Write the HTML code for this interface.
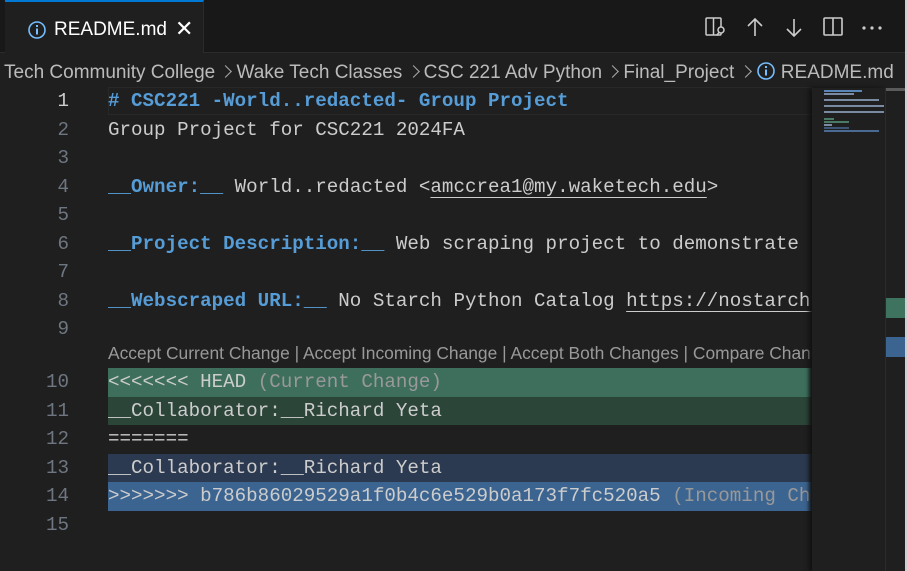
<!DOCTYPE html>
<html><head><style>
body{margin:0;width:907px;height:571px;background:#1f1f1f;overflow:hidden;position:relative;font-family:"Liberation Sans",sans-serif}
.tabbar{position:absolute;left:0;top:0;width:907px;height:53px;background:#181818;border-bottom:1px solid #2b2b2b;box-sizing:border-box}
.tab{position:absolute;left:5px;top:0;width:199px;height:53px;background:#1f1f1f;border-top:2px solid #0078d4;box-sizing:border-box;border-right:1px solid #2b2b2b}
.tab .t{position:absolute;left:49px;top:17px;color:#fff;font-size:19px}
.tab .x{position:absolute;left:170px;top:14px;color:#fff;font-size:22px}
.crumb{position:absolute;left:4px;top:61px;color:#bbb;font-size:19px;white-space:nowrap}
.ln{position:absolute;left:0;top:0;width:69px;color:#6e7681;font:19.2px "Liberation Mono",monospace}
.ln .row{width:69px;text-align:right}
.code{position:absolute;left:108px;width:704px;white-space:pre;color:#cccccc;font:19.2px "Liberation Mono",monospace;overflow:hidden}
.row{position:absolute;left:0;height:28.5px;line-height:28.5px}
.b{color:#569cd6;font-weight:bold}
.u{text-decoration:underline;text-underline-offset:5px}
.mm{position:absolute;left:812px;top:88px;width:73px;height:483px;background:#1f1f1f;box-shadow:-3px 0 4px #111}
.mb{position:absolute;height:2px;background:#7a8aa0}
.chev{display:inline-block;width:8px;height:8px;border-top:1.5px solid #aaa;border-right:1.5px solid #aaa;transform:rotate(45deg);margin:0 6px 2px 1px}
</style></head><body>
<div class="tabbar">
 <div class="tab">
  <svg style="position:absolute;left:22px;top:18px" width="20" height="20" viewBox="0 0 20 20"><circle cx="10" cy="10" r="8" fill="none" stroke="#75beff" stroke-width="1.6"/><rect x="9" y="8.5" width="2" height="6" fill="#75beff"/><rect x="9" y="5" width="2" height="2" fill="#75beff"/></svg>
  <span class="t">README.md</span><span class="x">✕</span>
 </div>
 <svg style="position:absolute;left:705px;top:17px" width="22" height="20" viewBox="0 0 22 20" fill="none" stroke="#ccc" stroke-width="1.5"><rect x="1" y="1" width="15" height="17" rx="1"/><line x1="8.5" y1="1" x2="8.5" y2="18"/><circle cx="16" cy="13" r="3" fill="#181818"/><line x1="14" y1="15.5" x2="11.5" y2="18.5"/></svg>
 <svg style="position:absolute;left:745px;top:17px" width="20" height="20" viewBox="0 0 20 20" fill="none" stroke="#ccc" stroke-width="1.6"><path d="M10 19V2M3 9l7-7 7 7"/></svg>
 <svg style="position:absolute;left:784px;top:18px" width="20" height="20" viewBox="0 0 20 20" fill="none" stroke="#ccc" stroke-width="1.6"><path d="M10 1v17M3 11l7 7 7-7"/></svg>
 <svg style="position:absolute;left:823px;top:17px" width="20" height="20" viewBox="0 0 20 20" fill="none" stroke="#ccc" stroke-width="1.6"><rect x="1" y="1" width="18" height="17" rx="1"/><line x1="10" y1="1" x2="10" y2="18"/></svg>
 <svg style="position:absolute;left:861px;top:24px" width="22" height="8" viewBox="0 0 22 8" fill="#ccc"><circle cx="3" cy="4" r="1.6"/><circle cx="11" cy="4" r="1.6"/><circle cx="19" cy="4" r="1.6"/></svg>
</div>
<div class="crumb">Tech Community College <span class="chev"></span>Wake Tech Classes <span class="chev"></span>CSC 221 Adv Python <span class="chev"></span>Final_Project <span class="chev"></span><svg style="vertical-align:-3px" width="20" height="20" viewBox="0 0 20 20"><circle cx="10" cy="10" r="8" fill="none" stroke="#75beff" stroke-width="1.6"/><rect x="9" y="8.5" width="2" height="6" fill="#75beff"/><rect x="9" y="5" width="2" height="2" fill="#75beff"/></svg> README.md</div>

<div style="position:absolute;left:108px;top:87px;width:704px;height:28px;border:1px solid #282828;box-sizing:border-box"></div>
<div style="position:absolute;left:108px;top:368px;width:704px;height:28.5px;background:#3e6f5d"></div>
<div style="position:absolute;left:108px;top:396.5px;width:704px;height:28.5px;background:#2b4539"></div>
<div style="position:absolute;left:108px;top:453.5px;width:704px;height:28.5px;background:#2b3a50"></div>
<div style="position:absolute;left:108px;top:482px;width:704px;height:28.5px;background:#3c6490"></div>

<div class="ln">
<div class="row" style="top:87px;color:#ccc">1</div>
<div class="row" style="top:115.5px">2</div>
<div class="row" style="top:144px">3</div>
<div class="row" style="top:172.5px">4</div>
<div class="row" style="top:201px">5</div>
<div class="row" style="top:229.5px">6</div>
<div class="row" style="top:258px">7</div>
<div class="row" style="top:286.5px">8</div>
<div class="row" style="top:315px">9</div>
<div class="row" style="top:368px">10</div>
<div class="row" style="top:396.5px">11</div>
<div class="row" style="top:425px">12</div>
<div class="row" style="top:453.5px">13</div>
<div class="row" style="top:482px">14</div>
<div class="row" style="top:510.5px">15</div>
</div>
<div class="code" style="top:0;height:571px">
<div class="row" style="top:87px"><span class="b"># CSC221 -World..redacted- Group Project</span></div>
<div class="row" style="top:115.5px">Group Project for CSC221 2024FA</div>
<div class="row" style="top:172.5px"><span class="b">__Owner:__</span> World..redacted &lt;<span class="u">amccrea1@my.waketech.edu</span>&gt;</div>
<div class="row" style="top:229.5px"><span class="b">__Project Description:__</span> Web scraping project to demonstrate</div>
<div class="row" style="top:286.5px"><span class="b">__Webscraped URL:__</span> No Starch Python Catalog <span class="u">https://nostarch.com</span></div>
<div class="row" style="top:343px;height:25px;line-height:28px;font:17.4px 'Liberation Sans',sans-serif;color:#999">Accept Current Change | Accept Incoming Change | Accept Both Changes | Compare Changes</div>
<div class="row" style="top:368px">&lt;&lt;&lt;&lt;&lt;&lt;&lt; HEAD <span style="color:#999">(Current Change)</span></div>
<div class="row" style="top:396.5px">__Collaborator:__Richard Yeta</div>
<div class="row" style="top:425px">=======</div>
<div class="row" style="top:453.5px">__Collaborator:__Richard Yeta</div>
<div class="row" style="top:482px">&gt;&gt;&gt;&gt;&gt;&gt;&gt; b786b86029529a1f0b4c6e529b0a173f7fc520a5 <span style="color:#999">(Incoming Change)</span></div>
</div>

<div class="mm">
 <div class="mb" style="left:12px;top:2px;width:38px;background:#5b86b8"></div>
 <div class="mb" style="left:12px;top:5px;width:30px"></div>
 <div class="mb" style="left:12px;top:11px;width:55px"></div>
 <div class="mb" style="left:12px;top:17px;width:60px"></div>
 <div class="mb" style="left:12px;top:23px;width:60px"></div>
 <div class="mb" style="left:12px;top:30px;width:10px;background:#4a7a66"></div>
 <div class="mb" style="left:12px;top:33px;width:25px;background:#4a7a66"></div>
 <div class="mb" style="left:12px;top:36px;width:8px"></div>
 <div class="mb" style="left:12px;top:39px;width:25px;background:#3d5577"></div>
 <div class="mb" style="left:12px;top:42px;width:55px;background:#4a6a94"></div>
</div>
<div style="position:absolute;left:885px;top:88px;width:20px;height:483px;background:#1f1f1f;border-left:1px solid #2b2b2b"></div>
<div style="position:absolute;left:886px;top:88px;width:19px;height:3px;background:#5a5a5a"></div>
<div style="position:absolute;left:886px;top:298px;width:21px;height:20px;background:#3e7360"></div>
<div style="position:absolute;left:886px;top:337px;width:21px;height:20px;background:#3c6490"></div>
<div style="position:absolute;left:905px;top:0;width:2px;height:571px;background:#cfcfcf"></div>
</body></html>
